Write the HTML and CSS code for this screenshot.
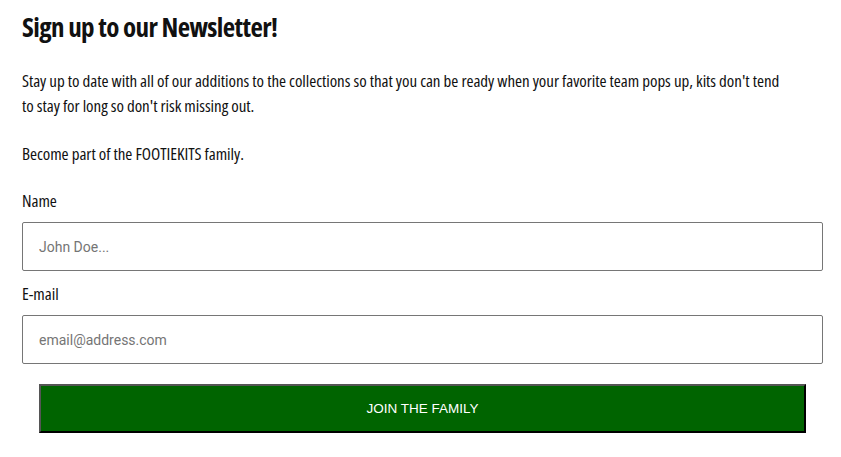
FILE: index.html
```html
<!DOCTYPE html>
<html>
<head>
<meta charset="utf-8">
<link rel="stylesheet" href="styles.css">
</head>
<body>
<section class="newsletter">
  <h1 class="title">Sign up to our Newsletter!</h1>
  <p class="text">Stay up to date with all of our additions to the collections so that you can be ready when your favorite team pops up, kits don't tend to stay for long so don't risk missing out.</p>
  <p class="text">Become part of the FOOTIEKITS family.</p>
  <form class="form">
    <label class="label" for="name">Name</label>
    <input class="field" id="name" type="text" placeholder="John Doe...">
    <label class="label" for="email">E-mail</label>
    <input class="field" id="email" type="email" placeholder="email@address.com">
    <button class="submit" type="button">JOIN THE FAMILY</button>
  </form>
</section>
</body>
</html>
```
FILE: styles.css
```css
html, body {
  margin: 0;
  padding: 0;
  background: #ffffff;
}
.newsletter {
  padding: 12px 18px 0 22px;
  font-family: "Open Sans", "Noto Sans", "DejaVu Sans", sans-serif;
  font-stretch: 75%;
  color: #111;
}
.title {
  margin: 0;
  font-size: 27px;
  line-height: 30px;
  font-weight: 700;
  letter-spacing: -0.6px;
}
.text {
  margin: 26px 0 0;
  width: 765px;
  font-size: 17px;
  line-height: 25px;
  font-weight: 500;
  letter-spacing: -0.05px;
}
.text + .text {
  margin-top: 23px;
}
.form {
  display: flex;
  flex-direction: column;
  margin-top: 24px;
}
.label {
  font-size: 17px;
  line-height: 22px;
  margin-bottom: 10px;
  font-weight: 500;
  letter-spacing: -0.05px;
}
.field {
  box-sizing: border-box;
  height: 49px;
  width: 801px;
  margin: 0 0 12px;
  padding: 0 16px;
  border: 1px solid #767676;
  border-radius: 2px;
  font-family: Roboto, "Liberation Sans", sans-serif;
  font-size: 14px;
  color: #222;
  background: #fff;
}
.field::placeholder {
  color: #757575;
}
.submit {
  box-sizing: border-box;
  margin: 8px 0 0 17px;
  width: 767px;
  height: 49px;
  background: #006400;
  color: #fff;
  border: 2px outset #555;
  border-right-color: #000;
  border-bottom-color: #000;
  font-family: "Liberation Sans", Arial, sans-serif;
  font-size: 13.5px;
}
```
